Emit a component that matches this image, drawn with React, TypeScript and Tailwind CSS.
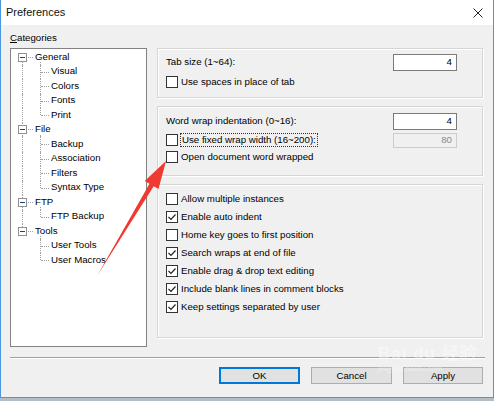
import React from "react";

type Node = { label: string; children?: string[] };

const tree: Node[] = [
  { label: "General", children: ["Visual", "Colors", "Fonts", "Print"] },
  { label: "File", children: ["Backup", "Association", "Filters", "Syntax Type"] },
  { label: "FTP", children: ["FTP Backup"] },
  { label: "Tools", children: ["User Tools", "User Macros"] },
];

const options: { label: string; checked: boolean }[] = [
  { label: "Allow multiple instances", checked: false },
  { label: "Enable auto indent", checked: true },
  { label: "Home key goes to first position", checked: false },
  { label: "Search wraps at end of file", checked: true },
  { label: "Enable drag & drop text editing", checked: true },
  { label: "Include blank lines in comment blocks", checked: true },
  { label: "Keep settings separated by user", checked: true },
];

function CheckBox({ checked }: { checked: boolean }) {
  return (
    <span className="flex h-[12px] w-[12px] shrink-0 items-center justify-center border border-[#333] bg-white">
      {checked && (
        <svg width="10" height="10" viewBox="0 0 10 10">
          <path d="M1.5 5 L4 7.5 L8.5 2.5" fill="none" stroke="#222" strokeWidth="1.2" />
        </svg>
      )}
    </span>
  );
}

function CheckRow({ label, checked, focus }: { label: string; checked: boolean; focus?: boolean }) {
  return (
    <div className="flex h-[18px] items-center">
      <CheckBox checked={checked} />
      <span
        className={
          focus
            ? "ml-[2px] border border-dotted border-[#333] px-px leading-[12px]"
            : "ml-[3px] leading-[12px]"
        }
      >
        {label}
      </span>
    </div>
  );
}

function TextBox({ value, disabled }: { value: string; disabled?: boolean }) {
  return (
    <div
      className={
        disabled
          ? "flex h-[15px] w-[64px] items-center justify-end border border-[#cccccc] bg-[#f0f0f0] pr-[4px] text-[#8a8a8a]"
          : "flex h-[17px] w-[64px] items-center justify-end border border-[#7a7a7a] bg-white pr-[4px]"
      }
    >
      {value}
    </div>
  );
}

function Group({ className, children }: { className: string; children: React.ReactNode }) {
  return (
    <div
      className={
        "border border-[#d5d5d5] pl-[8px] pr-[25px] shadow-[inset_1px_1px_0_#ffffff,1px_1px_0_#ffffff] " +
        className
      }
    >
      {children}
    </div>
  );
}

function TreeRoot({ label, first, last }: { label: string; first: boolean; last: boolean }) {
  return (
    <div className="relative flex h-[14.5px] items-center pl-[7px]">
      {!first && <span className="absolute left-[11px] top-0 h-[3px] border-l border-dotted border-[#a0a0a0]" />}
      {!last && <span className="absolute bottom-0 left-[11px] top-[12px] border-l border-dotted border-[#a0a0a0]" />}
      <span className="absolute bottom-0 left-[29px] top-[12px] border-l border-dotted border-[#a0a0a0]" />
      <span className="flex h-[9px] w-[9px] items-center justify-center border border-[#919191] bg-white">
        <span className="h-px w-[5px] bg-[#1e3f8a]" />
      </span>
      <span className="ml-px w-[5px] border-t border-dotted border-[#a0a0a0]" />
      <span className="ml-[2px]">{label}</span>
    </div>
  );
}

function TreeChild({ label, lastChild, rootLast }: { label: string; lastChild: boolean; rootLast: boolean }) {
  return (
    <div className="relative flex h-[14.5px] items-center pl-[40px]">
      {!rootLast && <span className="absolute bottom-0 left-[11px] top-0 border-l border-dotted border-[#a0a0a0]" />}
      <span
        className={
          lastChild
            ? "absolute left-[29px] top-0 h-[7px] border-l border-dotted border-[#a0a0a0]"
            : "absolute bottom-0 left-[29px] top-0 border-l border-dotted border-[#a0a0a0]"
        }
      />
      <span className="absolute left-[30px] top-[7px] w-[8px] border-t border-dotted border-[#a0a0a0]" />
      <span>{label}</span>
    </div>
  );
}

export default function App() {
  return (
    <div className="relative h-[401px] w-[494px] overflow-hidden bg-[#b4bcc4] font-['Liberation_Sans',Arial,sans-serif] text-[9.7px] text-black">
      <div className="flex h-[398px] flex-col border-x border-b border-[#4a97e0] bg-[#f0f0f0]">
        {/* title bar */}
        <div className="flex h-[25px] shrink-0 items-center justify-between bg-white pl-[5px]">
          <span className="text-[11px] text-[#111]">Preferences</span>
          <svg className="mr-[10px]" width="10" height="10" viewBox="0 0 10 10">
            <path d="M0.5 0.5 L9.5 9.5 M9.5 0.5 L0.5 9.5" stroke="#222" strokeWidth="1" />
          </svg>
        </div>

        <div className="h-[23px] pl-[9px] pt-[6px] leading-[14px]">
          <span className="underline decoration-1 underline-offset-1">C</span>ategories
        </div>

        <div className="flex h-[299px] pl-[9px]">
          {/* categories tree */}
          <div className="h-[299px] w-[137px] border border-[#828282] bg-white pt-px">
            {tree.map((n, i) => (
              <div key={n.label}>
                <TreeRoot label={n.label} first={i === 0} last={i === tree.length - 1} />
                {n.children?.map((c, j) => (
                  <TreeChild
                    key={c}
                    label={c}
                    lastChild={j === (n.children?.length ?? 0) - 1}
                    rootLast={i === tree.length - 1}
                  />
                ))}
              </div>
            ))}
          </div>

          {/* settings */}
          <div className="ml-[10px] flex w-[326px] flex-col">
            <Group className="h-[50px]">
              <div className="mt-[5px] flex h-[17px] items-center justify-between">
                <span>Tab size (1~64):</span>
                <TextBox value="4" />
              </div>
              <div className="mt-[2px]">
                <CheckRow label="Use spaces in place of tab" checked={false} />
              </div>
            </Group>

            <Group className="mt-[8px] h-[70px]">
              <div className="mt-[6px] flex h-[17px] items-center justify-between">
                <span>Word wrap indentation (0~16):</span>
                <TextBox value="4" />
              </div>
              <div className="mt-[2px] flex h-[16px] items-center justify-between">
                <CheckRow label="Use fixed wrap width (16~200):" checked={false} focus />
                <TextBox value="80" disabled />
              </div>
              <CheckRow label="Open document word wrapped" checked={false} />
            </Group>

            <Group className="mt-[8px] h-[154px] pt-[5px]">
              {options.map((o) => (
                <CheckRow key={o.label} label={o.label} checked={o.checked} />
              ))}
            </Group>
          </div>
        </div>

        <div className="ml-[9px] mt-[10px] h-[2px] w-[475px] border-t border-[#a0a0a0] border-b border-b-white" />

        <div className="mt-[8px] flex justify-end gap-[11px] pr-[10px]">
          <button className="h-[17px] w-[81px] border-2 border-[#0078d7] bg-[#e1e1e1] leading-none">OK</button>
          <button className="h-[17px] w-[81px] border border-[#adadad] bg-[#e1e1e1] leading-none">Cancel</button>
          <button className="h-[17px] w-[80px] border border-[#adadad] bg-[#e1e1e1] leading-none">Apply</button>
        </div>
      </div>

      {/* red annotation arrow */}
      <svg className="pointer-events-none absolute left-0 top-0" width="494" height="401" viewBox="0 0 494 401">
        <polygon
          points="97,276 149.5,183.7 144.7,180.9 166,161 158.5,189.1 153.7,186.3"
          fill="#ee3a30"
        />
      </svg>

      {/* watermark */}
      <div className="pointer-events-none absolute left-[378px] top-[344px] flex flex-col items-start whitespace-nowrap font-['Liberation_Sans','Noto_Sans_CJK_SC',sans-serif] text-white opacity-40">
        <span className="text-[17px] font-bold leading-[20px] tracking-[1px]">Bai du 经验</span>
        <span className="text-[8px] leading-[10px]">jingyan.baidu.com</span>
      </div>
    </div>
  );
}
